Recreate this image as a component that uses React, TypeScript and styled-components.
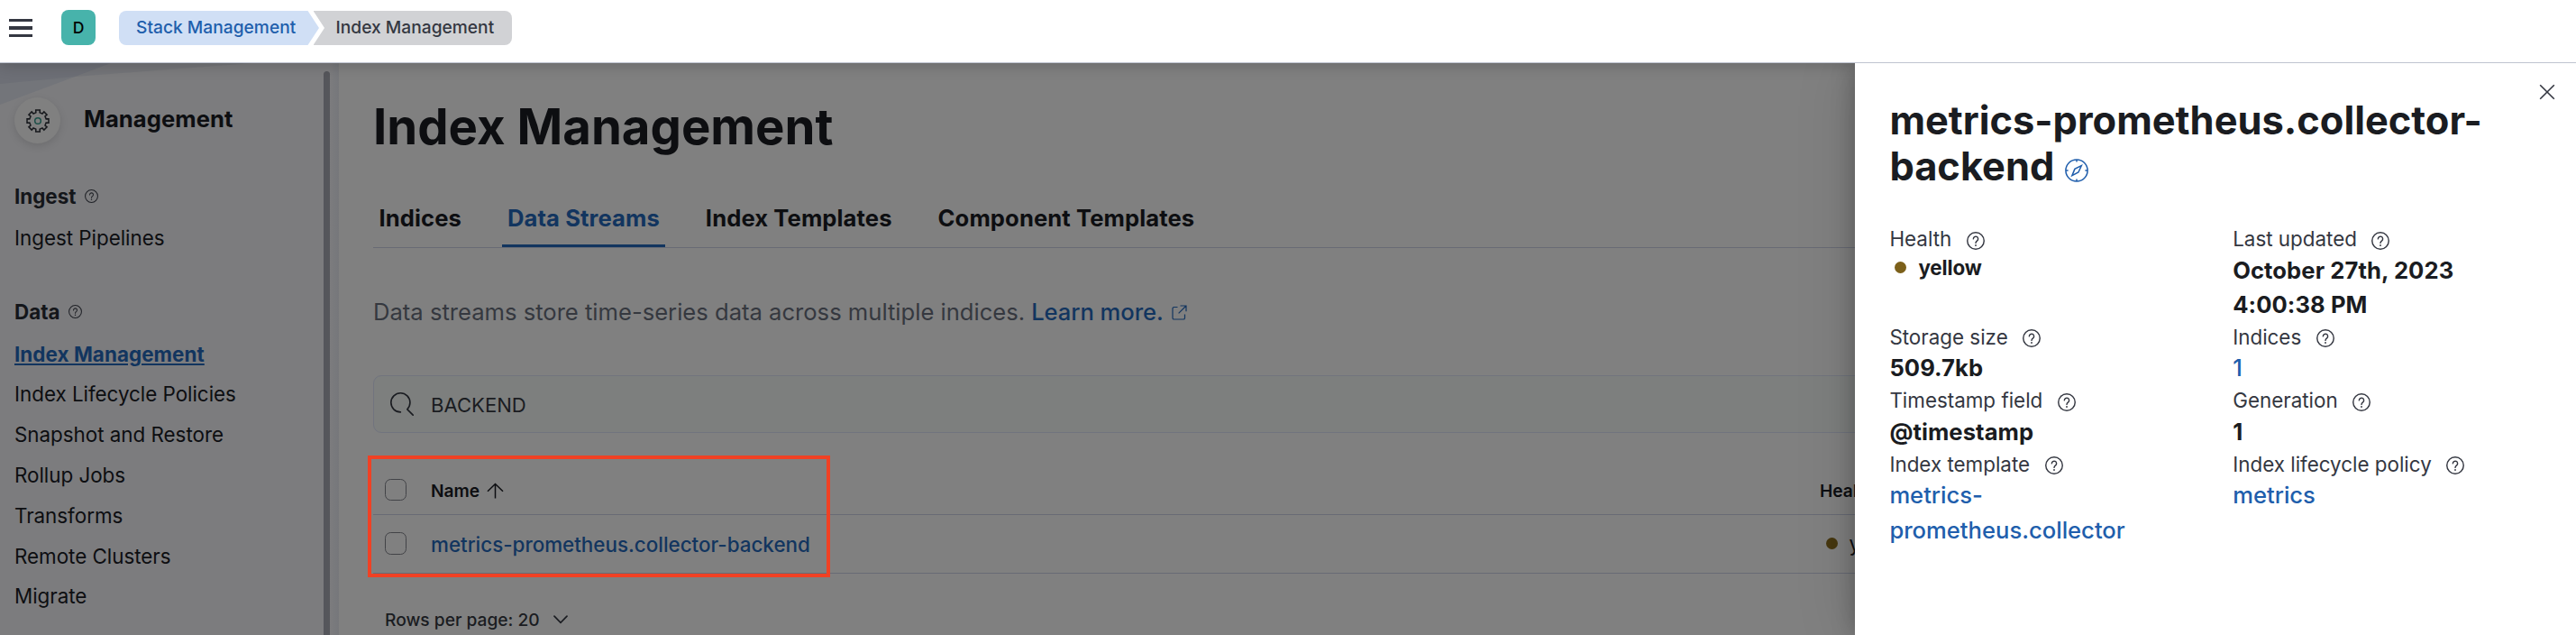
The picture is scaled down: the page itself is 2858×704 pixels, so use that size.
import React from 'react';
import styled, { createGlobalStyle, css } from 'styled-components';

const Global = createGlobalStyle`
  * { box-sizing: border-box; }
  html, body { margin: 0; padding: 0; overflow: hidden; }
  body { font-family: Inter, "Liberation Sans", sans-serif; font-size: 22.4px; color: #0d0e11; background: #808080; }
`;

const Page = styled.div`
  position: relative;
  display: flex;
  flex-direction: column;
  width: 100%;
  height: 704px;
  overflow: hidden;
`;

/* ---------- header ---------- */

const Header = styled.header`
  position: relative;
  z-index: 2;
  display: flex;
  align-items: flex-start;
  flex: none;
  height: 70px;
  padding: 11px 0 0 10px;
  background: #fff;
  border-bottom: 1px solid #bfc4d0;
  box-shadow: 0 2px 16px rgba(0, 0, 0, 0.2);
`;

const MenuButton = styled.div`
  display: flex;
  flex-direction: column;
  justify-content: space-between;
  width: 26px;
  height: 20px;
  margin-top: 10px;
`;

const MenuBar = styled.span`
  height: 3.4px;
  background: #343741;
`;

const Avatar = styled.div`
  width: 38px;
  height: 39px;
  margin-left: 32px;
  border-radius: 8px;
  background: #47b3ab;
  color: #000;
  font-size: 17.6px;
  font-weight: 500;
  line-height: 39px;
  text-align: center;
`;

const Breadcrumbs = styled.nav`
  display: flex;
  margin: 1px 0 0 26px;
`;

const Crumb = styled.span<{ $last?: boolean }>`
  height: 38px;
  font-size: 19.2px;
  font-weight: 500;
  line-height: 36px;
  white-space: nowrap;
  ${(p) =>
    p.$last
      ? css`
          width: 220.5px;
          margin-left: -6.5px;
          padding-left: 25px;
          color: #343741;
          background: #d1d2d5;
          border-radius: 0 8px 8px 0;
          clip-path: polygon(0 0, 100% 0, 100% 100%, 0 100%, 12.5px 50%);
        `
      : css`
          width: 222px;
          padding-left: 19px;
          color: #205eac;
          background: #d0dff5;
          border-radius: 8px 0 0 8px;
          clip-path: polygon(0 0, calc(100% - 12.5px) 0, 100% 50%, calc(100% - 12.5px) 100%, 0 100%);
        `}
`;

/* ---------- body ---------- */

const Body = styled.div`
  display: flex;
  flex: 1;
  min-height: 0;
`;

const Sidebar = styled.aside`
  position: relative;
  display: flex;
  flex: none;
  width: 376px;
  background: linear-gradient(to right, #7c7c7e 366px, #76777b 376px);
`;

const Backdrop = styled.svg`
  position: absolute;
  left: 0;
  top: 0;
`;

const SidebarContent = styled.div`
  position: relative;
  flex: 1;
  padding: 38px 0 0 16px;
`;

const Scrollbar = styled.div`
  position: relative;
  width: 7px;
  margin: 9px 10px 0 0;
  border-radius: 4px 4px 0 0;
  background: #55565b;
`;

const Solution = styled.div`
  display: flex;
  align-items: center;
  height: 51px;
`;

const SolutionIcon = styled.div`
  display: flex;
  align-items: center;
  justify-content: center;
  width: 51px;
  height: 51px;
  border-radius: 50%;
  background: #808080;
  box-shadow: 0 3px 10px rgba(0, 0, 0, 0.12);
`;

const SolutionName = styled.div`
  margin: 0 0 3px 26px;
  font-size: 25.6px;
  font-weight: 700;
  letter-spacing: 0.002em;
  line-height: 32px;
`;

const NavSection = styled.section`
  margin-top: 40.2px;
`;

const NavHeading = styled.div`
  display: flex;
  align-items: center;
  gap: 10px;
  height: 35.8px;
  margin-bottom: 7.4px;
  font-weight: 700;
  color: #14161a;
`;

const NavItem = styled.div<{ $active?: boolean }>`
  height: 44.8px;
  line-height: 44.8px;
  color: ${(p) => (p.$active ? '#12355f' : '#0d0e11')};
  font-weight: ${(p) => (p.$active ? 700 : 400)};
  letter-spacing: ${(p) => (p.$active ? '0.003em' : '-0.001em')};
  text-decoration: ${(p) => (p.$active ? 'underline' : 'none')};
  text-decoration-thickness: 2px;
  text-underline-offset: 2px;
`;

const Main = styled.main`
  flex: 1;
  min-width: 0;
  padding: 38px 38px 0 38px;
`;

const PageTitle = styled.h1`
  margin: 0;
  font-size: 54.5px;
  font-weight: 700;
  line-height: 64px;
`;

const Tabs = styled.div`
  display: flex;
  gap: 38.2px;
  height: 65px;
  margin-top: 38px;
  border-bottom: 1px solid #686b75;
`;

const Tab = styled.div<{ $active?: boolean }>`
  height: 64px;
  padding: 0 6.4px;
  font-size: 25.6px;
  font-weight: 700;
  letter-spacing: 0.004em;
  line-height: 64px;
  color: ${(p) => (p.$active ? '#12355f' : '#0d0e11')};
  border-bottom: 3px solid ${(p) => (p.$active ? '#12355f' : 'transparent')};
`;

const Intro = styled.p`
  display: flex;
  align-items: center;
  margin: 52px 0 0;
  font-size: 25.6px;
  line-height: 38.4px;
  color: #35383f;
`;

const IntroLink = styled.a`
  display: flex;
  align-items: center;
  gap: 9px;
  margin-left: 7px;
  font-weight: 500;
  letter-spacing: -0.002em;
  color: #12355f;
`;

const SearchBox = styled.div`
  display: flex;
  align-items: center;
  gap: 19px;
  height: 64px;
  margin-top: 50.6px;
  padding-left: 18px;
  border: 1px solid #71747e;
  border-radius: 9px;
  background: #7d7f7e;
  font-size: 22.1px;
  color: #1a1c21;
`;

const SearchText = styled.span`
  margin-top: 2px;
`;

const Table = styled.div`
  margin-top: 36px;
`;

const Row = styled.div<{ $head?: boolean }>`
  display: grid;
  grid-template-columns: 64px 1541px 1fr;
  align-items: center;
  height: ${(p) => (p.$head ? 55 : 65)}px;
  padding-bottom: ${(p) => (p.$head ? 0 : 1)}px;
  border-bottom: 1px solid #686b75;
`;

const Checkbox = styled.span`
  width: 24px;
  height: 24.5px;
  margin-left: 13px;
  border: 1px solid #424347;
  border-radius: 6.5px;
`;

const ColumnName = styled.div`
  display: flex;
  align-items: center;
  gap: 8px;
  padding-top: 1px;
  font-size: 19.2px;
  font-weight: 600;
`;

const StreamLink = styled.a`
  padding-top: 2px;
  font-weight: 500;
  line-height: 38px;
  color: #12355f;
`;

const HealthCell = styled.div`
  display: flex;
  align-items: center;
  gap: 12.5px;
  padding-left: 7px;
`;

const Dot = styled.span<{ $dimmed?: boolean }>`
  width: 13px;
  height: 13px;
  border-radius: 50%;
  background: ${(p) => (p.$dimmed ? '#46370f' : '#7c601a')};
`;

const Pager = styled.div`
  display: flex;
  align-items: center;
  gap: 15px;
  height: 38.4px;
  margin: 32.2px 0 0 13px;
  font-size: 19.2px;
  font-weight: 500;
  color: #1a1c21;
`;

const Highlight = styled.div`
  position: absolute;
  left: 408px;
  top: 505px;
  z-index: 1;
  width: 513px;
  height: 135px;
  border: 4px solid #f04124;
`;

/* ---------- flyout ---------- */

const Flyout = styled.section`
  position: absolute;
  top: 70px;
  left: 2058px;
  right: 0;
  bottom: 0;
  z-index: 3;
  padding: 37.6px 0 0 38.4px;
  background: #fff;
`;

const FlyoutShadow = styled.div`
  position: absolute;
  top: 70px;
  left: 2058px;
  right: 0;
  bottom: 0;
  z-index: 1;
  box-shadow: 0 0 24px rgba(0, 0, 0, 0.26), 0 0 64px rgba(0, 0, 0, 0.14);
`;

const CloseIcon = styled.svg`
  position: absolute;
  top: 23px;
  right: 23px;
`;

const FlyoutTitle = styled.h2`
  margin: 0;
  font-size: 43.4px;
  font-weight: 700;
  line-height: 51.2px;
  color: #1a1c21;
`;

const CompassIcon = styled.svg`
  margin: 0 0 -2px 12px;
`;

const Details = styled.dl`
  display: grid;
  grid-template-columns: 380.8px 1fr;
  margin: 38.5px 0 0;
`;

const Detail = styled.div``;

const Label = styled.dt`
  display: flex;
  align-items: center;
  gap: 16.5px;
  height: 32px;
  color: #343741;
  white-space: nowrap;

  svg { margin-top: 4px; }
`;

const Value = styled.dd<{ $link?: boolean }>`
  margin: 0;
  font-size: 25.6px;
  line-height: 38.4px;
  letter-spacing: ${(p) => (p.$link ? 0 : '0.003em')};
  font-weight: ${(p) => (p.$link ? 500 : 700)};
  color: ${(p) => (p.$link ? '#205eac' : '#1a1c21')};
`;

const HealthValue = styled.dd`
  display: flex;
  align-items: center;
  gap: 13px;
  height: 32px;
  margin: 0;
  padding-left: 6px;
  font-weight: 700;
  letter-spacing: -0.005em;
  color: #1a1c21;
`;

/* ---------- icons ---------- */

const Help = ({ size, color, stroke = 1 }: { size: number; color: string; stroke?: number }) => (
  <svg width={size} height={size} viewBox="0 0 16 16" fill="none" stroke={color} strokeWidth={stroke}>
    <circle cx="8" cy="8" r="7.4" />
    <path d="M5.9 6.3a2.1 2.1 0 1 1 3.4 1.6C8.5 8.5 8 8.9 8 9.9" strokeLinecap="round" />
    <circle cx="8" cy="12" r="0.75" fill={color} stroke="none" />
  </svg>
);

const gearPath = () => {
  const pts: string[] = [];
  for (let i = 0; i < 8; i++) {
    const a = (i * Math.PI) / 4;
    const corners: [number, number][] = [
      [9.4, -0.23],
      [12.2, -0.19],
      [12.2, 0.19],
      [9.4, 0.23],
    ];
    corners.forEach(([r, d]) => {
      pts.push(`${(13 + r * Math.sin(a + d)).toFixed(2)} ${(13 - r * Math.cos(a + d)).toFixed(2)}`);
    });
  }
  return `M${pts.join('L')}Z`;
};

const Gear = () => (
  <svg width="26" height="26" viewBox="0 0 26 26" fill="none">
    <path d={gearPath()} stroke="#17191d" strokeWidth="1.5" />
    <circle cx="13" cy="13" r="3.3" stroke="#1c4f48" strokeWidth="1.5" />
  </svg>
);

const SearchIcon = () => (
  <svg width="26" height="26" viewBox="0 0 16 16" fill="#1a1c21">
    <path d="m11.271 11.978 3.872 3.873a.502.502 0 0 0 .708 0 .502.502 0 0 0 0-.708l-3.565-3.564c2.38-2.747 2.267-6.923-.342-9.532-2.73-2.73-7.17-2.73-9.898 0-2.728 2.729-2.728 7.17 0 9.9a6.955 6.955 0 0 0 4.949 2.05.5.5 0 0 0 0-1 5.96 5.96 0 0 1-4.242-1.757 6.01 6.01 0 0 1 0-8.486 6.004 6.004 0 0 1 8.484 0 6.01 6.01 0 0 1 0 8.486.5.5 0 0 0 .034.738Z" />
  </svg>
);

const manageItems = [
  'Index Management',
  'Index Lifecycle Policies',
  'Snapshot and Restore',
  'Rollup Jobs',
  'Transforms',
  'Remote Clusters',
  'Migrate',
];

const tabs = ['Indices', 'Data Streams', 'Index Templates', 'Component Templates'];

const details: { label: string; lines: string[]; link?: boolean; health?: boolean }[] = [
  { label: 'Health', lines: ['yellow'], health: true },
  { label: 'Last updated', lines: ['October 27th, 2023', '4:00:38 PM'] },
  { label: 'Storage size', lines: ['509.7kb'] },
  { label: 'Indices', lines: ['1'], link: true },
  { label: 'Timestamp field', lines: ['@timestamp'] },
  { label: 'Generation', lines: ['1'] },
  { label: 'Index template', lines: ['metrics-', 'prometheus.collector'], link: true },
  { label: 'Index lifecycle policy', lines: ['metrics'], link: true },
];

export default function App() {
  return (
    <Page>
      <Global />
      <Header>
        <MenuButton>
          <MenuBar />
          <MenuBar />
          <MenuBar />
        </MenuButton>
        <Avatar>D</Avatar>
        <Breadcrumbs>
          <Crumb>Stack Management</Crumb>
          <Crumb $last>Index Management</Crumb>
        </Breadcrumbs>
      </Header>

      <Body>
        <Sidebar>
          <Backdrop width="366" height="60" viewBox="0 0 366 60">
            <path d="M0 0H123L83 15L0 46Z" fill="#4a5268" fillOpacity="0.17" />
            <path d="M0 0H280L83 15L0 23Z" fill="#454a58" fillOpacity="0.12" />
          </Backdrop>
          <SidebarContent>
            <Solution>
              <SolutionIcon>
                <Gear />
              </SolutionIcon>
              <SolutionName>Management</SolutionName>
            </Solution>
            <NavSection>
              <NavHeading>
                Ingest <Help size={15} color="#1f2126" stroke={1.1} />
              </NavHeading>
              <NavItem>Ingest Pipelines</NavItem>
            </NavSection>
            <NavSection>
              <NavHeading>
                Data <Help size={15} color="#1f2126" stroke={1.1} />
              </NavHeading>
              {manageItems.map((item, i) => (
                <NavItem key={item} $active={i === 0}>
                  {item}
                </NavItem>
              ))}
            </NavSection>
          </SidebarContent>
          <Scrollbar />
        </Sidebar>

        <Main>
          <PageTitle>Index Management</PageTitle>
          <Tabs>
            {tabs.map((tab, i) => (
              <Tab key={tab} $active={i === 1}>
                {tab}
              </Tab>
            ))}
          </Tabs>
          <Intro>
            Data streams store time-series data across multiple indices.
            <IntroLink>
              Learn more.
              <svg width="17" height="17" viewBox="0 0 17 17" fill="none" stroke="#12355f" strokeWidth="1.2">
                <path d="M6.5 2.5H2.6A1.6 1.6 0 0 0 1 4.1v10.3A1.6 1.6 0 0 0 2.6 16h10.3a1.6 1.6 0 0 0 1.6-1.6v-4M9.5 1H16v6.2M16 1L7.6 9.4" />
              </svg>
            </IntroLink>
          </Intro>
          <SearchBox>
            <SearchIcon />
            <SearchText>BACKEND</SearchText>
          </SearchBox>
          <Table>
            <Row $head>
              <Checkbox />
              <ColumnName>
                Name
                <svg width="19" height="18" viewBox="0 0 19 18" fill="none" stroke="#0d0e11" strokeWidth="1.5">
                  <path d="M9.5 17.5V1.5M1 9.8L9.5 1.5L18 9.8" />
                </svg>
              </ColumnName>
              <ColumnName>Health</ColumnName>
            </Row>
            <Row>
              <Checkbox />
              <StreamLink>metrics-prometheus.collector-backend</StreamLink>
              <HealthCell>
                <Dot $dimmed />
                yellow
              </HealthCell>
            </Row>
          </Table>
          <Pager>
            Rows per page: 20
            <svg width="16" height="10" viewBox="0 0 16 10" fill="none" stroke="#1a1c21" strokeWidth="1.7">
              <path d="M1 1.2L8 8.4L15 1.2" strokeLinecap="round" />
            </svg>
          </Pager>
        </Main>
      </Body>

      <Highlight />
      <FlyoutShadow />

      <Flyout>
        <CloseIcon width="18" height="18" viewBox="0 0 18 18" fill="none" stroke="#343741" strokeWidth="1.6">
          <path d="M1.2 1.2L16.8 16.8M16.8 1.2L1.2 16.8" />
        </CloseIcon>
        <FlyoutTitle>
          metrics-prometheus.collector-
          <br />
          backend
          <CompassIcon width="26" height="26" viewBox="0 0 26 26" fill="none" stroke="#205eac" strokeWidth="1.5">
            <circle cx="13" cy="13" r="12.1" />
            <path d="M13 1V3.6M13 22.4V25M1 13H3.6M22.4 13H25" />
            <path d="M18.3 7.7L14.9 15L7.9 18.6L10.9 11.4Z" strokeLinejoin="miter" />
          </CompassIcon>
        </FlyoutTitle>
        <Details>
          {details.map((d) => (
            <Detail key={d.label}>
              <Label>
                {d.label}
                <Help size={20} color="#343741" stroke={1.15} />
              </Label>
              {d.health ? (
                <HealthValue>
                  <Dot />
                  {d.lines[0]}
                </HealthValue>
              ) : (
                <Value $link={d.link}>
                  {d.lines.map((line) => (
                    <div key={line}>{line}</div>
                  ))}
                </Value>
              )}
            </Detail>
          ))}
        </Details>
      </Flyout>
    </Page>
  );
}
